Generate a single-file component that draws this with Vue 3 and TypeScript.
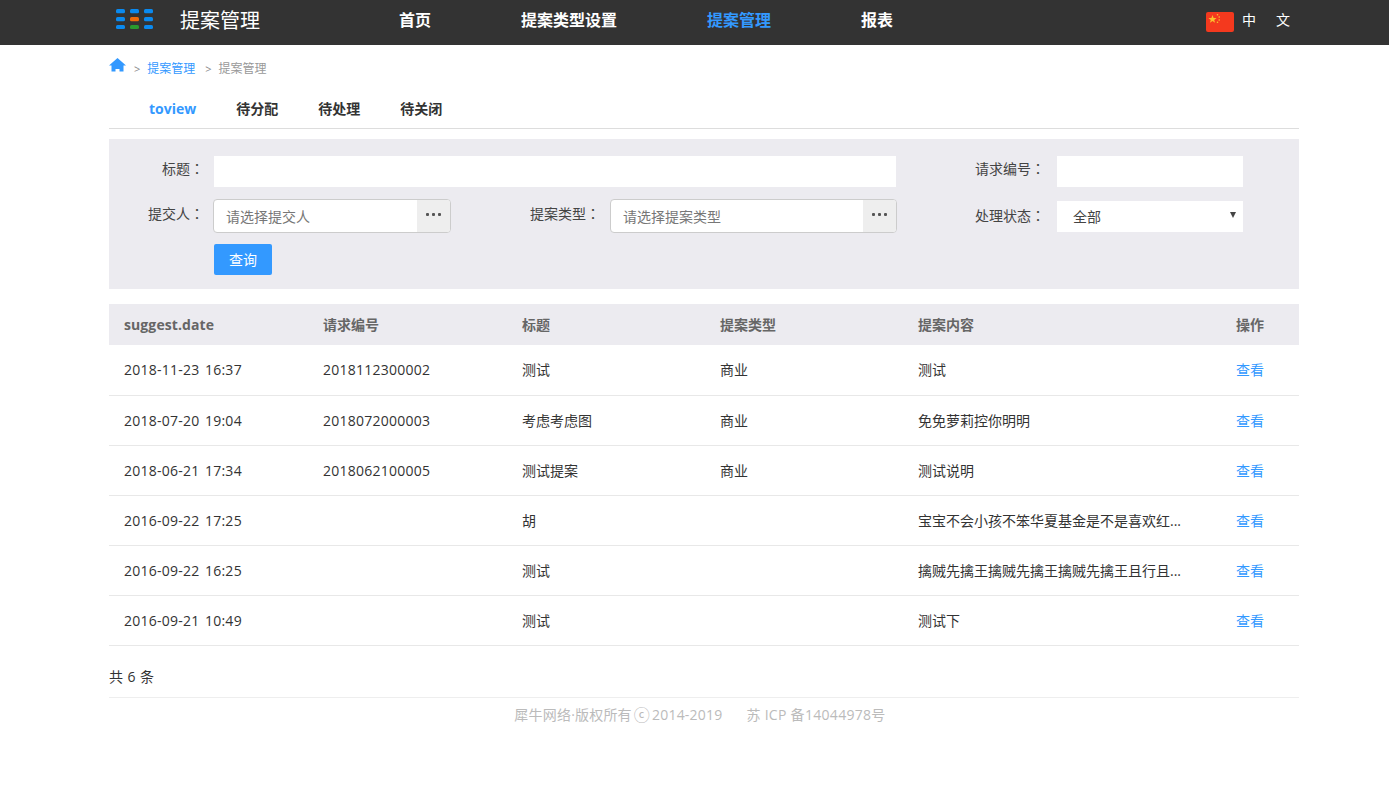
<script setup lang="ts">
interface Row { date: string; no: string; title: string; type: string; content: string }
const nav = [
  { label: '首页', w: 122, active: false },
  { label: '提案类型设置', w: 186, active: false },
  { label: '提案管理', w: 154, active: true },
  { label: '报表', w: 60, active: false },
]
const tabs = ['toview', '待分配', '待处理', '待关闭']
const cols = ['suggest.date', '请求编号', '标题', '提案类型', '提案内容', '操作']
const rows: Row[] = [
  { date: '2018-11-23 16:37', no: '2018112300002', title: '测试', type: '商业', content: '测试' },
  { date: '2018-07-20 19:04', no: '2018072000003', title: '考虑考虑图', type: '商业', content: '免免萝莉控你明明' },
  { date: '2018-06-21 17:34', no: '2018062100005', title: '测试提案', type: '商业', content: '测试说明' },
  { date: '2016-09-22 17:25', no: '', title: '胡', type: '', content: '宝宝不会小孩不笨华夏基金是不是喜欢红...' },
  { date: '2016-09-22 16:25', no: '', title: '测试', type: '', content: '擒贼先擒王擒贼先擒王擒贼先擒王且行且...' },
  { date: '2016-09-21 10:49', no: '', title: '测试', type: '', content: '测试下' },
]
</script>

<template>
  <div class="page">
    <header class="topbar">
      <div class="topbar-inner">
        <div class="logo">
          <svg width="40" height="21" viewBox="0 0 40 21">
            <g fill="#0a8af0">
              <rect x="1" y="1" width="9" height="4.3" rx="1.5" /><rect x="15" y="1" width="9" height="4.3" rx="1.5" /><rect x="29" y="1" width="9" height="4.3" rx="1.5" />
              <rect x="1" y="9" width="9" height="4.3" rx="1.5" /><rect x="29" y="9" width="9" height="4.3" rx="1.5" />
              <rect x="1" y="17" width="9" height="4" rx="1.5" /><rect x="29" y="17" width="9" height="4" rx="1.5" />
            </g>
            <rect x="15" y="9" width="9" height="4.3" rx="1.5" fill="#f06a0a" />
            <rect x="15" y="17" width="9" height="4" rx="1.5" fill="#2a9a2e" />
          </svg>
        </div>
        <div class="brand">提案管理</div>
        <nav class="nav">
          <a v-for="n in nav" :key="n.label" class="nav-item" :class="{ active: n.active }" :style="{ width: n.w + 'px' }">{{ n.label }}</a>
        </nav>
        <div class="lang">
          <svg class="flag" width="28" height="20" viewBox="0 0 28 20">
            <rect width="28" height="20" rx="2" fill="#f4391e" />
            <polygon points="6.5,3 7.6,6 10.6,6 8.2,7.9 9.1,10.8 6.5,9.1 3.9,10.8 4.8,7.9 2.4,6 5.4,6" fill="#fbc02d" />
            <circle cx="11.5" cy="2.8" r="0.8" fill="#fbc02d" />
            <circle cx="13.2" cy="5" r="0.8" fill="#fbc02d" />
            <circle cx="13.2" cy="8" r="0.8" fill="#fbc02d" />
            <circle cx="11.5" cy="10.2" r="0.8" fill="#fbc02d" />
          </svg>
          <span class="lang-text">中</span><span class="lang-text second">文</span>
        </div>
      </div>
    </header>

    <main class="container">
      <div class="crumbs">
        <svg class="home" width="17" height="15" viewBox="0 0 17 15">
          <path d="M8.5 0 L17 7.5 L14.5 7.5 L14.5 13.5 L10.5 13.5 L10.5 11 L6.5 11 L6.5 13.5 L2.5 13.5 L2.5 7.5 L0 7.5 Z" fill="#3399ff" />
        </svg>
        <span class="sep">&gt;</span><a class="crumb-link">提案管理</a>
        <span class="sep">&gt;</span><span class="crumb-cur">提案管理</span>
      </div>

      <div class="tabs">
        <a v-for="(t, i) in tabs" :key="t" class="tab" :class="{ active: i === 0 }">{{ t }}</a>
      </div>

      <section class="filter">
        <div class="frow first">
          <label class="lab lab1">标题<span class="colon">：</span></label>
          <input class="plain title-input" />
          <label class="lab lab3">请求编号<span class="colon">：</span></label>
          <input class="plain no-input" />
        </div>
        <div class="frow second">
          <label class="lab lab1">提交人<span class="colon">：</span></label>
          <div class="picker p1"><span class="ph">请选择提交人</span><span class="dots"><i></i><i></i><i></i></span></div>
          <label class="lab lab2">提案类型<span class="colon">：</span></label>
          <div class="picker p2"><span class="ph">请选择提案类型</span><span class="dots"><i></i><i></i><i></i></span></div>
          <label class="lab status-lab">处理状态<span class="colon">：</span></label>
          <div class="select"><span>全部</span><span class="caret"></span></div>
        </div>
        <button class="query">查询</button>
      </section>

      <div class="table">
        <div class="thead trow">
          <div v-for="c in cols" :key="c" class="cell">{{ c }}</div>
        </div>
        <div v-for="r in rows" :key="r.date" class="trow body">
          <div class="cell num">{{ r.date }}</div>
          <div class="cell num">{{ r.no }}</div>
          <div class="cell">{{ r.title }}</div>
          <div class="cell">{{ r.type }}</div>
          <div class="cell">{{ r.content }}</div>
          <div class="cell"><a class="view">查看</a></div>
        </div>
      </div>

      <div class="total">共 6 条</div>
      <footer class="footer"><span>犀牛网络·版权所有<span class="copy">ⓒ</span>2014-2019</span><span class="icp">苏 ICP 备14044978号</span></footer>
    </main>
  </div>
</template>

<style>
html, body { margin: 0; background: #fff; }
</style>

<style scoped>
.page {
  min-height: 790px;
  font-family: "Open Sans", "Noto Sans CJK SC", sans-serif;
  font-size: 14px;
  color: #333;
}
.topbar { height: 45px; background: #333; }
.topbar-inner { width: 1190px; margin-left: 109px; height: 41px; display: flex; align-items: center; }
.logo { width: 71px; padding-left: 6px; box-sizing: border-box; display: flex; height: 21px; margin-top: -4px; }
.brand { width: 219px; font-size: 20px; color: #fff; margin-top: -3px; }
.nav { display: flex; width: 808px; margin-top: -3px; }
.nav-item { font-size: 16px; font-weight: 700; color: #fff; white-space: nowrap; display: block; }
.nav-item.active { color: #3399ff; }
.lang { display: flex; align-items: center; color: #fff; font-size: 14px; margin-top: -3px; margin-left: -1px; }
.flag { margin-top: 5px; margin-right: 8px; }
.lang-text { width: 14px; }
.lang-text.second { margin-left: 20px; }

.container { width: 1190px; margin-left: 109px; }
.crumbs { height: 44px; display: flex; align-items: center; font-size: 12px; padding-top: 2px; box-sizing: border-box; }
.home { margin-top: -5px; margin-right: 8px; }
.sep { color: #888; margin-right: 7px; font-size: 11px; }
.crumb-link { color: #3399ff; margin-right: 10px; }
.crumb-cur { color: #999; }

.tabs { height: 39px; display: flex; border-bottom: 1px solid #ddd; padding-left: 40px; gap: 40px; align-items: center; font-size: 14px; font-weight: 700; }
.tab { color: #333; padding-bottom: 2px; }
.tab.active { color: #3399ff; padding-bottom: 0; }

.filter { margin-top: 10px; height: 150px; box-sizing: border-box; background: #ecebf0; padding-top: 17px; }
.frow { display: flex; align-items: center; }
.frow.first { height: 31px; }
.frow.second { height: 34px; margin-top: 12px; }
.lab { text-align: right; font-size: 14px; line-height: 20px; color: #444; white-space: nowrap; }
.colon { font-family: "Noto Sans CJK TC", sans-serif; }
.first .lab { margin-top: -6px; }
.second .lab { margin-top: -6px; }
.lab1 { width: 95px; margin-right: 10px; }
.second .lab1 { margin-right: 9px; }
.second .lab2 { width: 149px; margin-right: 10px; }
.plain { border: 0; padding: 0; background: #fff; height: 31px; display: block; outline: none; }
.title-input { width: 682px; }
.no-input { width: 186px; }
.first .lab3 { width: 149px; margin-right: 12px; }
.second .status-lab { width: 148px; margin-right: 12px; margin-top: -2px; }
.picker { height: 34px; box-sizing: border-box; border: 1px solid #ccc; border-radius: 4px; background: #fff; display: flex; overflow: hidden; }
.p1 { width: 238px; }
.p2 { width: 287px; }
.ph { flex: 1; padding-left: 12px; line-height: 33px; font-size: 14px; color: #777; white-space: nowrap; }
.dots { width: 33px; background: #eee; display: flex; align-items: center; justify-content: center; gap: 3px; padding-bottom: 3px; box-sizing: border-box; }
.dots i { width: 3px; height: 3px; background: #555; border-radius: 1px; display: block; }
.select { width: 186px; height: 31px; background: #fff; display: flex; align-items: center; justify-content: space-between; padding: 0 7px 0 16px; box-sizing: border-box; font-size: 14px; color: #444; }
.caret { width: 0; height: 0; border-left: 3px solid transparent; border-right: 3px solid transparent; border-top: 6px solid #444; margin-top: -3px; }
.query { display: block; margin: 11px 0 0 105px; width: 58px; height: 31px; background: #3399ff; color: #fff; border: 0; border-radius: 2px; font: inherit; font-size: 14px; padding: 0 0 2px; }

.table { margin-top: 15px; }
.trow { display: grid; grid-template-columns: 199px 199px 198px 198px 318px 78px; align-items: center; }
.thead { height: 41px; background: #ecebf0; font-weight: 700; color: #666; font-size: 14px; }
.body { height: 50px; border-bottom: 1px solid #e8e8e8; box-sizing: border-box; font-size: 14px; }
.thead + .body { height: 51px; }
.cell { padding-left: 15px; padding-bottom: 2px; white-space: nowrap; overflow: hidden; }
.thead .cell:first-child { padding-bottom: 0; letter-spacing: 0.1px; }
.cell.num { padding-bottom: 0; letter-spacing: 0.25px; word-spacing: 1.5px; }
.thead + .body .cell.num { padding-bottom: 2px; }
.view { color: #3399ff; }

.total { height: 52px; line-height: 62px; box-sizing: border-box; border-bottom: 1px solid #eee; font-size: 14px; letter-spacing: 0.4px; }
.footer { width: 1182px; text-align: center; color: #bbb; font-size: 14px; line-height: 34px; letter-spacing: 0.2px; }
.copy { font-size: 16px; line-height: 1; margin: 0 2px 0 2px; vertical-align: -1px; }
.icp { margin-left: 24px; letter-spacing: 0.3px; }
</style>
